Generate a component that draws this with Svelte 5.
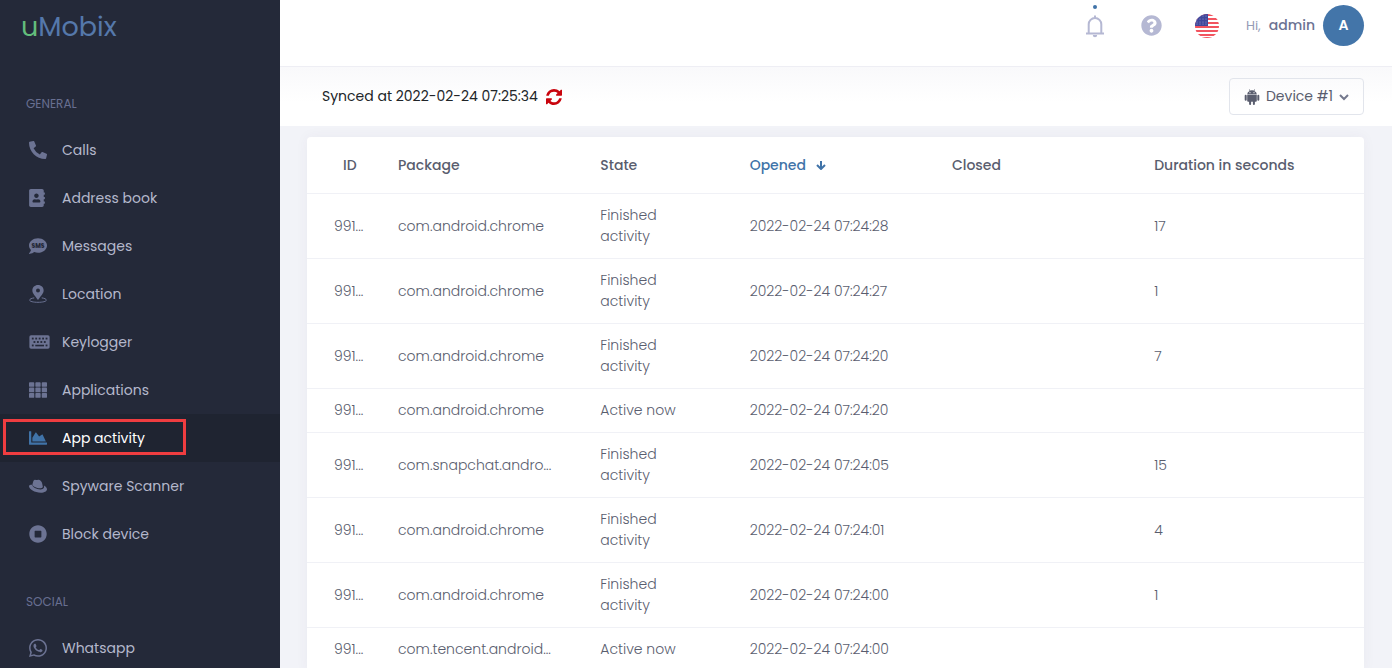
<script>
    const general = [
            { label: 'Calls', icon: 'phone' },
            { label: 'Address book', icon: 'book' },
            { label: 'Messages', icon: 'sms' },
            { label: 'Location', icon: 'location' },
            { label: 'Keylogger', icon: 'keyboard' },
            { label: 'Applications', icon: 'grid' },
            { label: 'App activity', icon: 'chart' },
            { label: 'Spyware Scanner', icon: 'hat' },
            { label: 'Block device', icon: 'stop' },
        ],
        social = [{ label: 'Whatsapp', icon: 'whatsapp' }],
        sections = [
            { title: 'General', items: general },
            { title: 'Social', items: social },
        ];

    const paths = {
        phone: 'M497.39 361.8l-112-48a24 24 0 0 0-28 6.9l-49.6 60.6A370.66 370.66 0 0 1 130.6 204.11l60.6-49.6a23.94 23.94 0 0 0 6.9-28l-48-112A24.16 24.16 0 0 0 122.6.61l-104 24A24 24 0 0 0 0 48c0 256.5 207.9 464 464 464a24 24 0 0 0 23.4-18.6l24-104a24.29 24.29 0 0 0-14.01-27.6z',
        book: 'M436 160c6.6 0 12-5.4 12-12v-40c0-6.6-5.4-12-12-12h-20V48c0-26.5-21.5-48-48-48H48C21.5 0 0 21.5 0 48v416c0 26.5 21.5 48 48 48h320c26.5 0 48-21.5 48-48v-48h20c6.6 0 12-5.4 12-12v-40c0-6.6-5.4-12-12-12h-20v-64h20c6.6 0 12-5.4 12-12v-40c0-6.6-5.4-12-12-12h-20v-64h20zm-228-32c35.3 0 64 28.7 64 64s-28.7 64-64 64-64-28.7-64-64 28.7-64 64-64zm112 236.8c0 10.6-10 19.2-22.4 19.2H118.4C106 384 96 375.4 96 364.8v-19.2c0-31.8 30.1-57.6 67.2-57.6h5c12.3 5.1 25.7 8 39.8 8s27.6-2.9 39.8-8h5c37.1 0 67.2 25.8 67.2 57.6v19.2z',
        sms: 'M256 32C114.6 32 0 125.1 0 240c0 49.6 21.4 95 57 130.7C44.5 421.1 2.7 466 2.2 466.5c-2.2 2.3-2.8 5.7-1.5 8.7 1.3 3 4.1 4.8 7.3 4.8 66.3 0 116-31.8 140.6-51.4 32.7 12.3 69 19.4 107.4 19.4 141.4 0 256-93.1 256-208S397.4 32 256 32z',
        chart: 'M500 384c6.6 0 12 5.4 12 12v40c0 6.6-5.4 12-12 12H12c-6.6 0-12-5.4-12-12V76c0-6.6 5.4-12 12-12h40c6.6 0 12 5.4 12 12v308h436zM372.7 159.5L288 216l-85.3-113.7c-5.1-6.8-15.5-6.3-19.9 1L96 248v104h384l-89.9-187.8c-3.2-6.5-11.4-8.7-17.4-4.7z',
        hat: 'M312 322c33 0 81-7 81-46 0-9-20-101-24-113-10-30-54-86-101-86-24 0-31 10-50 10-18 0-26-14-50-12-24 2-38 28-48 52l-22 78c-4 60 118 117 214 117zM426 240c12 46 6 112-102 112-108 0-226-68-234-132C38 220 0 232 0 266c0 84 162 182 336 182 106 0 176-50 176-100 0-38-36-82-86-108z',
        stop: 'M256 8C119 8 8 119 8 256s111 248 248 248 248-111 248-248S393 8 256 8zm96 328c0 8.8-7.2 16-16 16H176c-8.8 0-16-7.2-16-16V176c0-8.8 7.2-16 16-16h160c8.8 0 16 7.2 16 16v160z',
        whatsapp:
            'M380.9 97.1C339 55.1 283.2 32 223.9 32c-122.4 0-222 99.6-222 222 0 39.1 10.2 77.3 29.6 111L0 480l117.7-30.9c32.4 17.7 68.9 27 106.1 27h.1c122.3 0 224.1-99.6 224.1-222 0-59.3-25.2-115-67.1-157zm-157 341.6c-33.2 0-65.7-8.9-94-25.7l-6.7-4-69.8 18.3L72 359.2l-4.4-7c-18.5-29.4-28.2-63.3-28.2-98.2 0-101.7 82.8-184.5 184.6-184.5 49.3 0 95.6 19.2 130.4 54.1 34.8 34.9 56.2 81.2 56.1 130.5 0 101.8-84.9 184.6-186.6 184.6zm101.2-138.2c-5.5-2.8-32.8-16.2-37.9-18-5.1-1.9-8.8-2.8-12.5 2.8-3.7 5.6-14.3 18-17.6 21.8-3.2 3.7-6.5 4.2-12 1.4-32.6-16.3-54-29.1-75.5-66-5.7-9.8 5.7-9.1 16.3-30.3 1.8-3.7.9-6.9-.5-9.7-1.4-2.8-12.5-30.1-17.1-41.2-4.5-10.8-9.1-9.3-12.5-9.5-3.2-.2-6.9-.2-10.6-.2-3.7 0-9.7 1.4-14.8 6.9-5.1 5.6-19.4 19-19.4 46.3 0 27.3 19.9 53.7 22.6 57.4 2.8 3.7 39.1 59.7 94.8 83.8 35.2 15.2 49 16.5 66.6 13.9 10.7-1.6 32.8-13.4 37.4-26.4 4.6-13 4.6-24.1 3.2-26.4-1.3-2.5-5-3.9-10.5-6.6z',
    };

    const boxes = {
        book: '0 0 448 512',
        keyboard: '0 0 576 512',
        whatsapp: '0 32 448 448',
    };

    const chrome = 'com.android.chrome',
        finished = 'Finished activity';
    const columns = ['ID', 'Package', 'State', 'Opened', 'Closed', 'Duration in seconds'];
    const rows = [
        { id: '991...', pkg: chrome, state: finished, opened: '2022-02-24 07:24:28', duration: 17 },
        { id: '991...', pkg: chrome, state: finished, opened: '2022-02-24 07:24:27', duration: 1 },
        { id: '991...', pkg: chrome, state: finished, opened: '2022-02-24 07:24:20', duration: 7 },
        { id: '991...', pkg: chrome, state: 'Active now', opened: '2022-02-24 07:24:20' },
        { id: '991...', pkg: 'com.snapchat.andro...', state: finished, opened: '2022-02-24 07:24:05', duration: 15 },
        { id: '991...', pkg: chrome, state: finished, opened: '2022-02-24 07:24:01', duration: 4 },
        { id: '991...', pkg: chrome, state: finished, opened: '2022-02-24 07:24:00', duration: 1 },
        { id: '991...', pkg: 'com.tencent.android...', state: 'Active now', opened: '2022-02-24 07:24:00' },
    ];

    let active = 'App activity';
</script>

<div class="app">
    <aside>
        <a class="logo" href="#home"><span>u</span>Mobix</a>
        <nav>
            {#each sections as section}
                <h4>{section.title}</h4>
                <ul>
                    {#each section.items as item}
                        <li class:active={active === item.label}>
                            <a href="#{item.icon}" on:click={() => (active = item.label)}>
                                <svg
                                    class="icon"
                                    class:wide={item.icon === 'keyboard'}
                                    class:narrow={item.icon === 'book'}
                                    viewBox={boxes[item.icon] || '0 0 512 512'}
                                    aria-hidden="true">
                                    {#if item.icon === 'location'}
                                        <path
                                            fill-rule="evenodd"
                                            d="M256 0c-92 0-160 68-160 154 0 92 84 148 160 276 76-128 160-184 160-276C416 68 348 0 256 0zm0 98a56 56 0 1 1 0 112 56 56 0 0 1 0-112z" />
                                        <path
                                            class="line"
                                            d="M150 366C70 378 18 400 18 430c0 38 106 62 238 62s238-24 238-62c0-30-52-52-132-64" />
                                    {:else if item.icon === 'keyboard'}
                                        <rect y="64" width="576" height="384" rx="48" />
                                        <g class="keys">
                                            {#each [70, 168, 266, 364, 462] as x}
                                                <rect {x} y="132" width="52" height="52" />
                                            {/each}
                                            {#each [118, 216, 314, 412] as x}
                                                <rect {x} y="230" width="52" height="52" />
                                            {/each}
                                            <rect x="70" y="328" width="52" height="52" />
                                            <rect x="168" y="334" width="248" height="46" />
                                            <rect x="462" y="328" width="52" height="52" />
                                        </g>
                                    {:else if item.icon === 'grid'}
                                        {#each [32, 187, 342] as y}
                                            {#each [0, 181, 362] as x}
                                                <rect {x} {y} width="150" height="134" rx="24" />
                                            {/each}
                                        {/each}
                                    {:else}
                                        <path d={paths[item.icon]} />
                                        {#if item.icon === 'sms'}
                                            <text x="256" y="302" text-anchor="middle">SMS</text>
                                        {/if}
                                    {/if}
                                </svg>
                                <span>{item.label}</span>
                            </a>
                        </li>
                    {/each}
                </ul>
            {/each}
        </nav>
    </aside>

    <div class="page">
        <header>
            <button class="bell" aria-label="Notifications">
                <svg viewBox="0 0 24 24" width="24" height="24">
                    <path d="M12 1.500v2M3 19.500h18M5.700 19V10.300a6.300 6.300 0 0 1 12.600 0V19" />
                    <path class="clapper" d="M9.800 21h4.400a2.200 2.200 0 0 1-4.400 0z" />
                </svg>
            </button>
            <button aria-label="Help">
                <svg class="help" viewBox="0 0 512 512" width="21" height="21">
                    <path
                        d="M504 256c0 136.997-111.043 248-248 248S8 392.997 8 256C8 119.083 119.043 8 256 8s248 111.083 248 248zM262.655 90c-54.497 0-89.255 22.957-116.549 63.758-3.536 5.286-2.353 12.415 2.715 16.258l34.699 26.31c5.205 3.947 12.621 3.008 16.665-2.122 17.864-22.658 30.113-35.797 57.303-35.797 20.429 0 45.698 13.148 45.698 32.958 0 14.976-12.363 22.667-32.534 33.976C247.128 238.528 216 254.941 216 296v4c0 6.627 5.373 12 12 12h56c6.627 0 12-5.373 12-12v-1.333c0-28.462 83.186-29.647 83.186-106.667 0-58.002-60.165-102-116.531-102zM256 338c-25.365 0-46 20.635-46 46 0 25.364 20.635 46 46 46s46-20.636 46-46c0-25.365-20.635-46-46-46z" />
                </svg>
            </button>
            <button aria-label="Language">
                <svg viewBox="0 0 26 26" width="26" height="26">
                    <clipPath id="round"><circle cx="13" cy="13" r="12" /></clipPath>
                    <g clip-path="url(#round)">
                        <rect width="26" height="26" fill="#fff" />
                        {#each [1, 5, 9, 13, 17, 21] as y}
                            <rect {y} width="26" height="2" fill="#f2545f" />
                        {/each}
                        <rect y="24" width="26" height="2" fill="#f2545f" />
                        <rect width="14" height="13" fill="#41479b" />
                        {#each [3, 6, 9, 12] as x}
                            {#each [3, 6, 9, 11] as y}
                                <circle cx={x} cy={y} r="0.5" fill="#a5a9d6" />
                            {/each}
                        {/each}
                    </g>
                </svg>
            </button>
            <button class="user">
                <span class="hi">Hi,</span>
                <span class="name">admin</span>
                <span class="avatar">A</span>
            </button>
        </header>

        <div class="subheader">
            <p>
                Synced at 2022-02-24 07:25:34
                <button aria-label="Sync now">
                    <svg viewBox="0 0 1536 1536" width="16" height="16">
                        <path
                            d="M1511 928q0 5-1 7-64 268-268 434.500t-478 166.500q-146 0-282.500-55t-243.500-157l-129 129q-19 19-45 19t-45-19-19-45v-448q0-26 19-45t45-19h448q26 0 45 19t19 45-19 45l-137 137q71 66 161 102t187 36q134 0 250-65t186-179q11-17 53-117 8-23 30-23h192q13 0 22.500 9.500t9.500 22.500zm25-800v448q0 26-19 45t-45 19h-448q-26 0-45-19t-19-45 19-45l138-138q-148-137-349-137-134 0-250 65t-186 179q-11 17-53 117-8 23-30 23h-199q-13 0-22.500-9.500t-9.500-22.500v-7q65-268 270-434.500t480-166.500q146 0 284 55.500t245 156.500l130-129q19-19 45-19t45 19 19 45z" />
                    </svg>
                </button>
            </p>
            <button class="device">
                <svg viewBox="0 0 16 16" width="16" height="16">
                    <path
                        d="M3.200 5.200a4.800 4 0 0 1 2.500-3.300L4.900.6l.5-.3.800 1.300a6 6 0 0 1 3.600 0L10.600.3l.5.3-.8 1.300a4.800 4 0 0 1 2.500 3.300zM6 3.100a.55.55 0 1 0 0 1.100.55.55 0 0 0 0-1.100zm4 0a.55.55 0 1 0 0 1.100.55.55 0 0 0 0-1.100zM3.200 5.700h9.600v6.100a1 1 0 0 1-1 1h-.9v2.100a1 1 0 0 1-2 0v-2.100H7.100v2.100a1 1 0 0 1-2 0v-2.100h-.9a1 1 0 0 1-1-1zM.7 6.700a1 1 0 0 1 2 0v4a1 1 0 0 1-2 0zm12.600 0a1 1 0 0 1 2 0v4a1 1 0 0 1-2 0z" />
                </svg>
                Device #1
                <svg class="caret" viewBox="0 0 10 10" width="10" height="10">
                    <path d="M1 3l4 4 4-4" />
                </svg>
            </button>
        </div>

        <main>
            <div class="card">
                <table>
                    <thead>
                        <tr>
                            {#each columns as column}
                                <th class:sorted={column === 'Opened'}>
                                    {column}
                                    {#if column === 'Opened'}
                                        <svg viewBox="0 0 10 10" width="10" height="10">
                                            <path d="M5 1v8M1 5l4 4 4-4" />
                                        </svg>
                                    {/if}
                                </th>
                            {/each}
                        </tr>
                    </thead>
                    <tbody>
                        {#each rows as row}
                            <tr>
                                <td>{row.id}</td>
                                <td>{row.pkg}</td>
                                <td><div class="state">{row.state}</div></td>
                                <td>{row.opened}</td>
                                <td></td>
                                <td>{row.duration ?? ''}</td>
                            </tr>
                        {/each}
                    </tbody>
                </table>
            </div>
        </main>
    </div>
</div>

<style>
    :global(body) {
        background: #f2f3f8;
        font-family: Poppins, Inter, 'Open Sans', sans-serif;
        font-size: 14px;
        color: #595d6e;
    }
    .app {
        display: flex;
        height: 100vh;
        overflow: hidden;
    }
    button {
        background: none;
        border: 0;
        padding: 0;
        font: inherit;
        color: inherit;
        cursor: pointer;
    }
    aside {
        flex: 0 0 280px;
        background: #242939;
        overflow: hidden;
    }
    .logo {
        display: block;
        height: 82px;
        box-sizing: border-box;
        padding: 10px 21px;
        font-size: 27px;
        line-height: 34px;
        color: #5578ab;
        text-decoration: none;
    }
    .logo span {
        color: #63bd7c;
    }
    h4 {
        margin: 0;
        padding: 0 26px;
        font-size: 12px;
        line-height: 44px;
        font-weight: 400;
        text-transform: uppercase;
        color: #686f91;
    }
    ul {
        list-style: none;
        margin: 0 0 22px;
        padding: 0;
    }
    li a {
        display: flex;
        align-items: center;
        gap: 12px;
        height: 48px;
        padding: 0 29px;
        color: #b4b8cc;
        text-decoration: none;
    }
    .icon {
        width: 18px;
        height: 18px;
        margin-right: 3px;
        fill: #6c7393;
    }
    .icon.wide {
        width: 21px;
        margin-right: 0;
    }
    .icon.narrow {
        width: 16px;
        margin-right: 5px;
    }
    .icon .line {
        fill: none;
        stroke: #6c7393;
        stroke-width: 28;
    }
    .icon .keys,
    .icon text {
        fill: #242939;
    }
    .icon text {
        font-size: 170px;
        font-weight: 800;
    }
    .active {
        background: #1f2431;
    }
    .active a {
        color: #fff;
        position: relative;
    }
    .active .icon {
        fill: #4073a8;
    }
    .active a::before {
        content: '';
        position: absolute;
        left: 3px;
        top: 5px;
        width: 177px;
        height: 30px;
        border: 3px solid #ef3d40;
    }
    .page {
        flex: 1;
        min-width: 0;
    }
    header {
        display: flex;
        align-items: center;
        justify-content: flex-end;
        gap: 32px;
        height: 67px;
        box-sizing: border-box;
        padding: 0 28px 15px 0;
        background: #fff;
        border-bottom: 1px solid #eeeef4;
    }
    header button {
        display: flex;
        align-items: center;
    }
    header svg {
        display: block;
    }
    .bell {
        position: relative;
        margin-right: 2px;
    }
    .bell svg {
        fill: none;
        stroke: #b5b8d3;
        stroke-width: 2;
    }
    .bell .clapper {
        fill: #b5b8d3;
        stroke: none;
    }
    .bell::before {
        content: '';
        position: absolute;
        top: -9px;
        left: 10px;
        width: 4px;
        height: 4px;
        border-radius: 50%;
        background: #4073a8;
    }
    .help {
        fill: #b5b8d3;
    }
    .user {
        gap: 8px;
        margin-left: -6px;
    }
    .hi {
        color: #959cb6;
        font-size: 13px;
    }
    .name {
        color: #6c7293;
        font-weight: 500;
    }
    .avatar {
        width: 41px;
        line-height: 41px;
        border-radius: 50%;
        background: #4375a9;
        color: #fff;
        font-weight: 600;
        text-align: center;
    }
    .subheader {
        display: flex;
        align-items: center;
        justify-content: space-between;
        height: 59px;
        padding: 0 28px 0 42px;
        background: linear-gradient(#f9f9fb, #fff 36px);
    }
    .subheader p {
        display: flex;
        align-items: center;
        gap: 8px;
        margin: 0;
        color: #212529;
    }
    p button {
        height: 16px;
        fill: #c9040d;
    }
    p svg {
        display: block;
    }
    .device {
        display: flex;
        align-items: center;
        gap: 6px;
        padding: 0 14px;
        line-height: 35px;
        border: 1px solid #e2e5ec;
        border-radius: 4px;
        fill: #595d6e;
    }
    .caret {
        fill: none;
        stroke: #74788d;
        stroke-width: 2;
    }
    main {
        padding: 11px 28px 0 27px;
    }
    .card {
        background: #fff;
        border-radius: 4px;
        box-shadow: 0 0 13px rgba(82, 63, 105, 0.05);
    }
    table {
        width: 100%;
        table-layout: fixed;
        border-collapse: collapse;
        line-height: 21px;
    }
    th,
    td {
        padding: 11px 0 11px 12px;
        border-bottom: 1px solid #f0f1f6;
        text-align: left;
        white-space: nowrap;
    }
    th {
        padding-top: 18px;
        padding-bottom: 17px;
        font-weight: 500;
        color: #595d6e;
    }
    td {
        font-weight: 300;
        color: #595d6e;
    }
    th:first-child,
    td:first-child {
        width: 52px;
        padding-left: 27px;
    }
    th:first-child {
        padding-left: 36px;
        width: 43px;
    }
    th:nth-child(2) {
        width: 18%;
    }
    th:nth-child(3) {
        width: 13%;
    }
    th:nth-child(4),
    th:nth-child(5) {
        width: 18%;
    }
    .state {
        width: 90px;
        white-space: normal;
    }
    .sorted {
        color: #4073a8;
    }
    .sorted svg {
        margin-left: 6px;
        fill: none;
        stroke: #4073a8;
        stroke-width: 2;
    }
</style>
